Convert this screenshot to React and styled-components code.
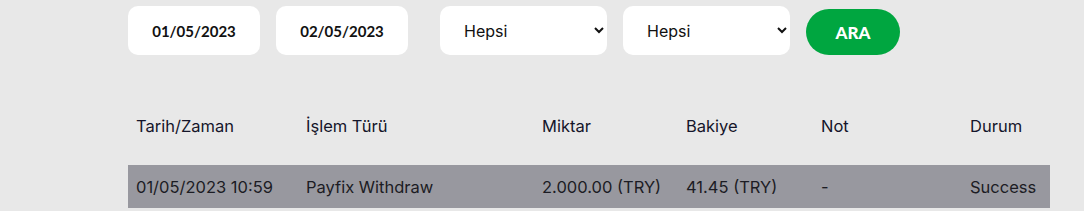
import styled, { createGlobalStyle } from "styled-components"

const GlobalStyle = createGlobalStyle`
    html, body {
        margin: 0;
        padding: 0;
        background: #e8e8e8;
        font-family: "Inter", "Noto Sans", sans-serif;
    }
`

const rows = [
    { date: "01/05/2023 10:59", type: "Payfix Withdraw", amount: "2.000.00 (TRY)", balance: "41.45 (TRY)", note: "-", status: "Success" },
]

const columns = ["Tarih/Zaman", "İşlem Türü", "Miktar", "Bakiye", "Not", "Durum"]
const widths = [170, 236, 144, 135, 149, 88]

const App = () => {
    return (
        <StPage>
            <GlobalStyle />
            <StFilterBar>
                <StDateInput type="text" defaultValue="01/05/2023" />
                <StDateInput type="text" defaultValue="02/05/2023" />
                <StSelect $gap={32} defaultValue="all">
                    <option value="all">Hepsi</option>
                </StSelect>
                <StSelect defaultValue="all">
                    <option value="all">Hepsi</option>
                </StSelect>
                <StButton>ARA</StButton>
            </StFilterBar>
            <StTable>
                <colgroup>
                    {widths.map((w, i) => <col key={i} style={{ width: w }} />)}
                </colgroup>
                <thead>
                    <tr>
                        {columns.map(c => <StTh key={c}>{c}</StTh>)}
                    </tr>
                </thead>
                <tbody>
                    {rows.map((r, i) => (
                        <StRow key={i}>
                            <StTd>{r.date}</StTd>
                            <StTd>{r.type}</StTd>
                            <StTd>{r.amount}</StTd>
                            <StTd>{r.balance}</StTd>
                            <StTd>{r.note}</StTd>
                            <StTd>{r.status}</StTd>
                        </StRow>
                    ))}
                </tbody>
            </StTable>
        </StPage>
    )
}

export default App

const StPage = styled.div`
    padding: 6px 0 0 128px;
    width: 922px;
`
const StFilterBar = styled.div`
    display: flex;
    align-items: flex-start;
    gap: 16px;
`
const StDateInput = styled.input`
    box-sizing: border-box;
    width: 132px;
    height: 49px;
    border: none;
    border-radius: 10px;
    background: #fff;
    text-align: center;
    font-family: "Lato", sans-serif;
    font-weight: 700;
    font-size: 15px;
    color: #111;
    outline: none;
`
const StSelect = styled.select`
    box-sizing: border-box;
    width: 167px;
    height: 49px;
    margin-left: ${p => (p.$gap ? p.$gap - 16 : 0)}px;
    border: none;
    border-radius: 10px;
    background: #fff;
    padding: 0 4px 0 20px;
    font-family: "Inter", sans-serif;
    font-size: 16px;
    color: #111;
    outline: none;
`
const StButton = styled.button`
    width: 94px;
    height: 46px;
    margin-top: 3px;
    border: none;
    border-radius: 23px;
    background: #00a640;
    color: #fff;
    font-family: "Lato", sans-serif;
    font-weight: 900;
    font-size: 17px;
    cursor: pointer;
`
const StTable = styled.table`
    margin-top: 48px;
    width: 922px;
    border-collapse: collapse;
    table-layout: fixed;
`
const StTh = styled.th`
    text-align: left;
    font-weight: 400;
    font-size: 16.5px;
    line-height: 20px;
    color: #15152a;
    padding: 13px 8px 29px;
    vertical-align: middle;
`
const StRow = styled.tr`
    background: #98989f;
`
const StTd = styled.td`
    padding: 0 8px;
    height: 43px;
    font-size: 16.5px;
    color: #1c1c24;
    white-space: nowrap;
`
